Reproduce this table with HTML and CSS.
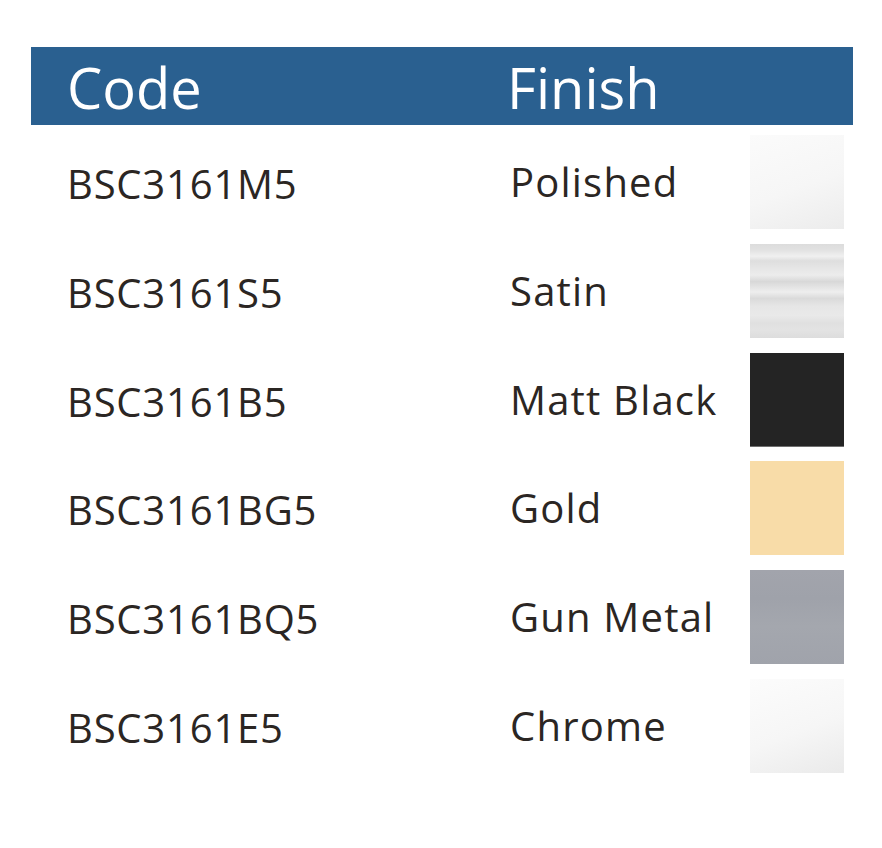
FILE: index.html
```html
<!DOCTYPE html>
<html>
<head>
<meta charset="utf-8">
<link rel="stylesheet" href="styles.css">
</head>
<body>
<div class="table">
  <div class="head">
    <div class="h-code">Code</div>
    <div class="h-finish">Finish</div>
  </div>
  <div class="rows">
    <div class="code">BSC3161M5</div><div class="finish">Polished</div><div class="sw sw-polished"></div>
    <div class="code">BSC3161S5</div><div class="finish">Satin</div><div class="sw sw-satin"></div>
    <div class="code">BSC3161B5</div><div class="finish">Matt Black</div><div class="sw sw-black"></div>
    <div class="code">BSC3161BG5</div><div class="finish">Gold</div><div class="sw sw-gold"></div>
    <div class="code">BSC3161BQ5</div><div class="finish">Gun Metal</div><div class="sw sw-gun"></div>
    <div class="code">BSC3161E5</div><div class="finish">Chrome</div><div class="sw sw-chrome"></div>
  </div>
</div>
</body>
</html>
```
FILE: styles.css
```css
html, body {
  margin: 0;
  padding: 0;
  background: #ffffff;
}
body {
  font-family: "Open Sans", "Noto Sans", sans-serif;
  color: #2b2623;
}
.table {
  margin-top: 47px;
  margin-left: 31px;
  width: 822px;
}
.head {
  background: #2a6090;
  height: 78px;
  display: grid;
  grid-template-columns: 441px 1fr;
  padding-left: 36px;
  align-items: center;
  color: #ffffff;
  font-size: 56px;
  line-height: 1;
}
.head > div {
  margin-top: 2px;
}
.h-finish {
  margin-left: -1px;
}
.rows {
  margin-top: 10px;
  display: grid;
  grid-template-columns: 441px 241px 94px;
  grid-auto-rows: 94px;
  row-gap: 14.8px;
  padding-left: 37px;
  align-items: center;
}
.code, .finish {
  font-size: 40px;
  line-height: 1;
  letter-spacing: 0.9px;
}
.code {
  margin-top: 4px;
  margin-left: -1px;
  letter-spacing: 0.8px;
}
.finish {
  margin-left: 1px;
  letter-spacing: 1.2px;
}
.sw {
  width: 94px;
  height: 94px;
  box-sizing: border-box;
}
.sw-polished {
  background: linear-gradient(160deg, #fbfbfb 0%, #f6f6f6 55%, #ececec 100%);
}
.sw-satin {
  background: linear-gradient(180deg,
    #dcdcdc 0%, #e1e1e1 6%, #f0f0f0 13%, #dedede 18%, #e6e6e6 26%,
    #ececec 33%, #d8d8d8 40%, #e2e2e2 45%, #eeeeee 51%, #dadada 58%,
    #e6e6e6 66%, #e9e9e9 76%, #e0e0e0 84%, #e3e3e3 92%, #dddddd 100%);
}
.sw-black {
  background: #242424;
  border-bottom: 1px solid #6f6f6f;
}
.sw-gold {
  background: #f8dca8;
}
.sw-gun {
  background: linear-gradient(180deg, #a2a4ac 0%, #9fa2aa 30%, #a4a7ae 60%, #a0a3ab 100%);
}
.sw-chrome {
  background: linear-gradient(160deg, #fcfcfc 0%, #f6f6f6 55%, #eaeaea 100%);
}
```
